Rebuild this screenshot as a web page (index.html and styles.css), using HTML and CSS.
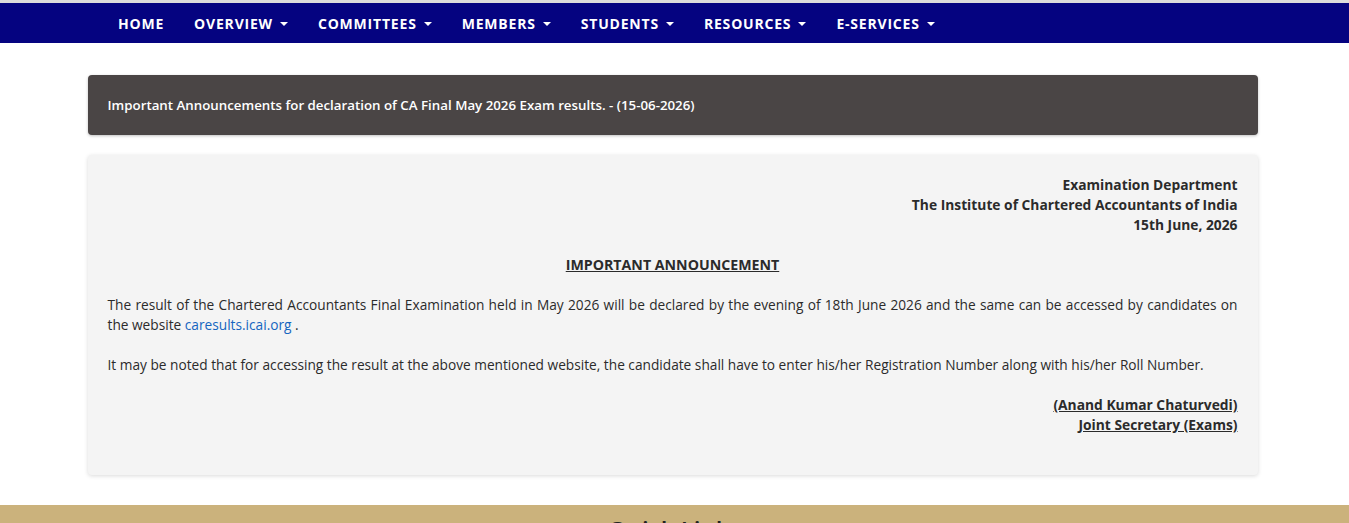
FILE: index.html
```
<!DOCTYPE html>
<html lang="en">
<head>
  <meta charset="UTF-8">
  <meta name="viewport" content="width=device-width, initial-scale=1.0">
  <title>ICAI - Important Announcement</title>
  <link rel="stylesheet" href="styles.css">
</head>
<body>
  <!-- Barra de navegación principal -->
  <nav class="navbar">
    <ul class="nav-menu">
      <li><a href="#">Home</a></li>
      <li><a href="#">Overview <span class="caret"></span></a></li>
      <li><a href="#">Committees <span class="caret"></span></a></li>
      <li><a href="#">Members <span class="caret"></span></a></li>
      <li><a href="#">Students <span class="caret"></span></a></li>
      <li><a href="#">Resources <span class="caret"></span></a></li>
      <li><a href="#">E-Services <span class="caret"></span></a></li>
    </ul>
  </nav>

  <div class="container">
    <div class="panel-heading">
      Important Announcements for declaration of CA Final May 2026 Exam results. - (15-06-2026)
    </div>

    <div class="panel-body">
      <p class="right">
        Examination Department<br>
        The Institute of Chartered Accountants of India<br>
        15th June, 2026
      </p>

      <p class="title"><u>IMPORTANT ANNOUNCEMENT</u></p>

      <p class="justify">
        The result of the Chartered Accountants Final Examination held in May 2026 will be declared by the evening of 18th June 2026 and the same can be accessed by candidates on the website <a href="#">caresults.icai.org</a> .
      </p>

      <p>
        It may be noted that for accessing the result at the above mentioned website, the candidate shall have to enter his/her Registration Number along with his/her Roll Number.
      </p>

      <p class="right sign">
        <u>(Anand Kumar Chaturvedi)</u><br>
        <u>Joint Secretary (Exams)</u>
      </p>
    </div>
  </div>

  <footer>
    <h3>Quick Links</h3>
  </footer>
</body>
</html>
```

FILE: styles.css
```
* {
  margin: 0;
  padding: 0;
  box-sizing: border-box;
}
body {
  font-family: "Open Sans", "Noto Sans", Arial, sans-serif;
  background: #fff;
  color: #2b2b2b;
  border-top: 3px solid #dcdcdc;
}
.navbar {
  background: #050380;
  height: 40px;
}
.nav-menu {
  list-style: none;
  display: flex;
  gap: 30px;
  padding-left: 118px;
  height: 100%;
  align-items: center;
}
.nav-menu a {
  color: #fff;
  text-decoration: none;
  text-transform: uppercase;
  font-weight: 700;
  font-size: 14px;
  letter-spacing: 0.8px;
  display: flex;
  align-items: center;
  gap: 7px;
}
.caret {
  width: 0;
  height: 0;
  border-left: 4.5px solid transparent;
  border-right: 4.5px solid transparent;
  border-top: 4px solid #fff;
  margin-top: 2px;
}
.container {
  width: 1170px;
  margin: 32px auto 30px calc(50% - 587px);
}
.panel-heading {
  background: #4a4545;
  color: #fff;
  font-weight: 600;
  font-size: 13.3px;
  padding: 20px 20px;
  border-radius: 4px;
  box-shadow: 0 1px 3px rgba(0,0,0,0.25);
  line-height: 20px;
}
.panel-body {
  margin-top: 20px;
  background: #f4f4f4;
  border-radius: 4px;
  box-shadow: 0 1px 4px rgba(0,0,0,0.15);
  padding: 20px 20px 20px;
  font-size: 13.7px;
  line-height: 20px;
  font-weight: 500;
  min-height: 320px;
}
.panel-body p {
  margin-bottom: 20px;
}
.panel-body .right {
  text-align: right;
  font-weight: 700;
  font-size: 13.8px;
}
.panel-body .title {
  text-align: center;
  font-weight: 700;
  font-size: 14.2px;
}
.panel-body .justify {
  text-align: justify;
}
.panel-body a {
  color: #1565c0;
  text-decoration: none;
}
.panel-body .sign {
  margin-bottom: 0;
}
footer {
  background: #cbb27c;
  height: 60px;
  text-align: center;
  padding-top: 8px;
}
footer h3 {
  font-size: 24px;
  font-weight: 600;
  color: #222;
}
```
